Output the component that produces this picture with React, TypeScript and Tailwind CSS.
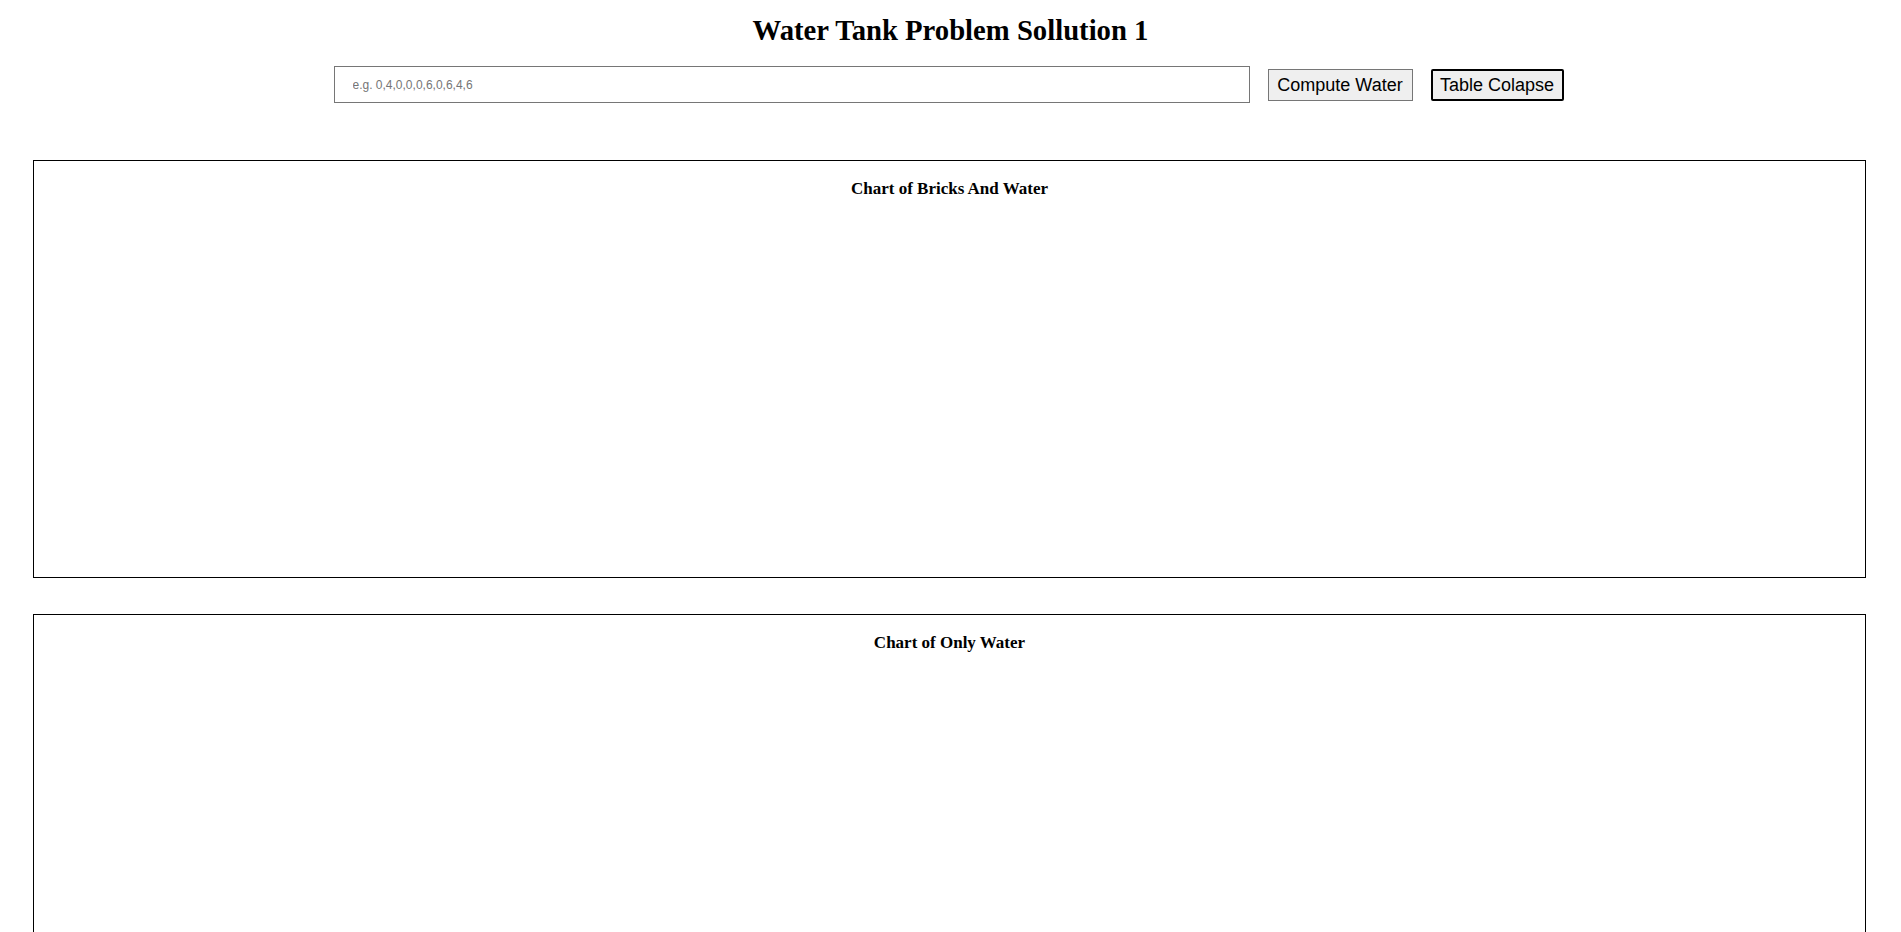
import React from "react";

const ChartBox = ({ title }: { title: string }) => {
  return (
    <div className="ml-[33px] mr-[35px] h-[418px] border border-black bg-white">
      <h4
        className="pt-[19px] text-center text-[17px] font-bold leading-[18px] text-black"
        style={{ fontFamily: '"Liberation Serif", serif' }}
      >
        {title}
      </h4>
    </div>
  );
};

const App = () => {
  return (
    <div className="min-h-screen bg-white text-black">
      <h1
        className="pt-[13px] text-center text-[28.7px] font-bold leading-[34px]"
        style={{ fontFamily: '"Liberation Serif", serif' }}
      >
        Water Tank Problem Sollution 1
      </h1>
      <div
        className="mt-[19px] flex items-center justify-center gap-[18px] pr-[4px]"
        style={{ fontFamily: '"Liberation Sans", Arial, sans-serif' }}
      >
        <input
          type="text"
          placeholder="e.g. 0,4,0,0,0,6,0,6,4,6"
          className="h-[37px] w-[916px] border border-[#767676] px-[18px] text-[12px] placeholder:text-[#757575] outline-none"
        />
        <button className="h-[32px] w-[145px] border border-[#767676] bg-[#efefef] text-[18px] leading-none text-black">
          Compute Water
        </button>
        <button className="h-[32px] w-[133px] rounded-[2px] border-2 border-black bg-[#efefef] text-[18px] leading-none text-black">
          Table Colapse
        </button>
      </div>
      <div className="mt-[57px] flex flex-col gap-[36px]">
        <ChartBox title="Chart of Bricks And Water" />
        <ChartBox title="Chart of Only Water" />
      </div>
    </div>
  );
};

export default App;
